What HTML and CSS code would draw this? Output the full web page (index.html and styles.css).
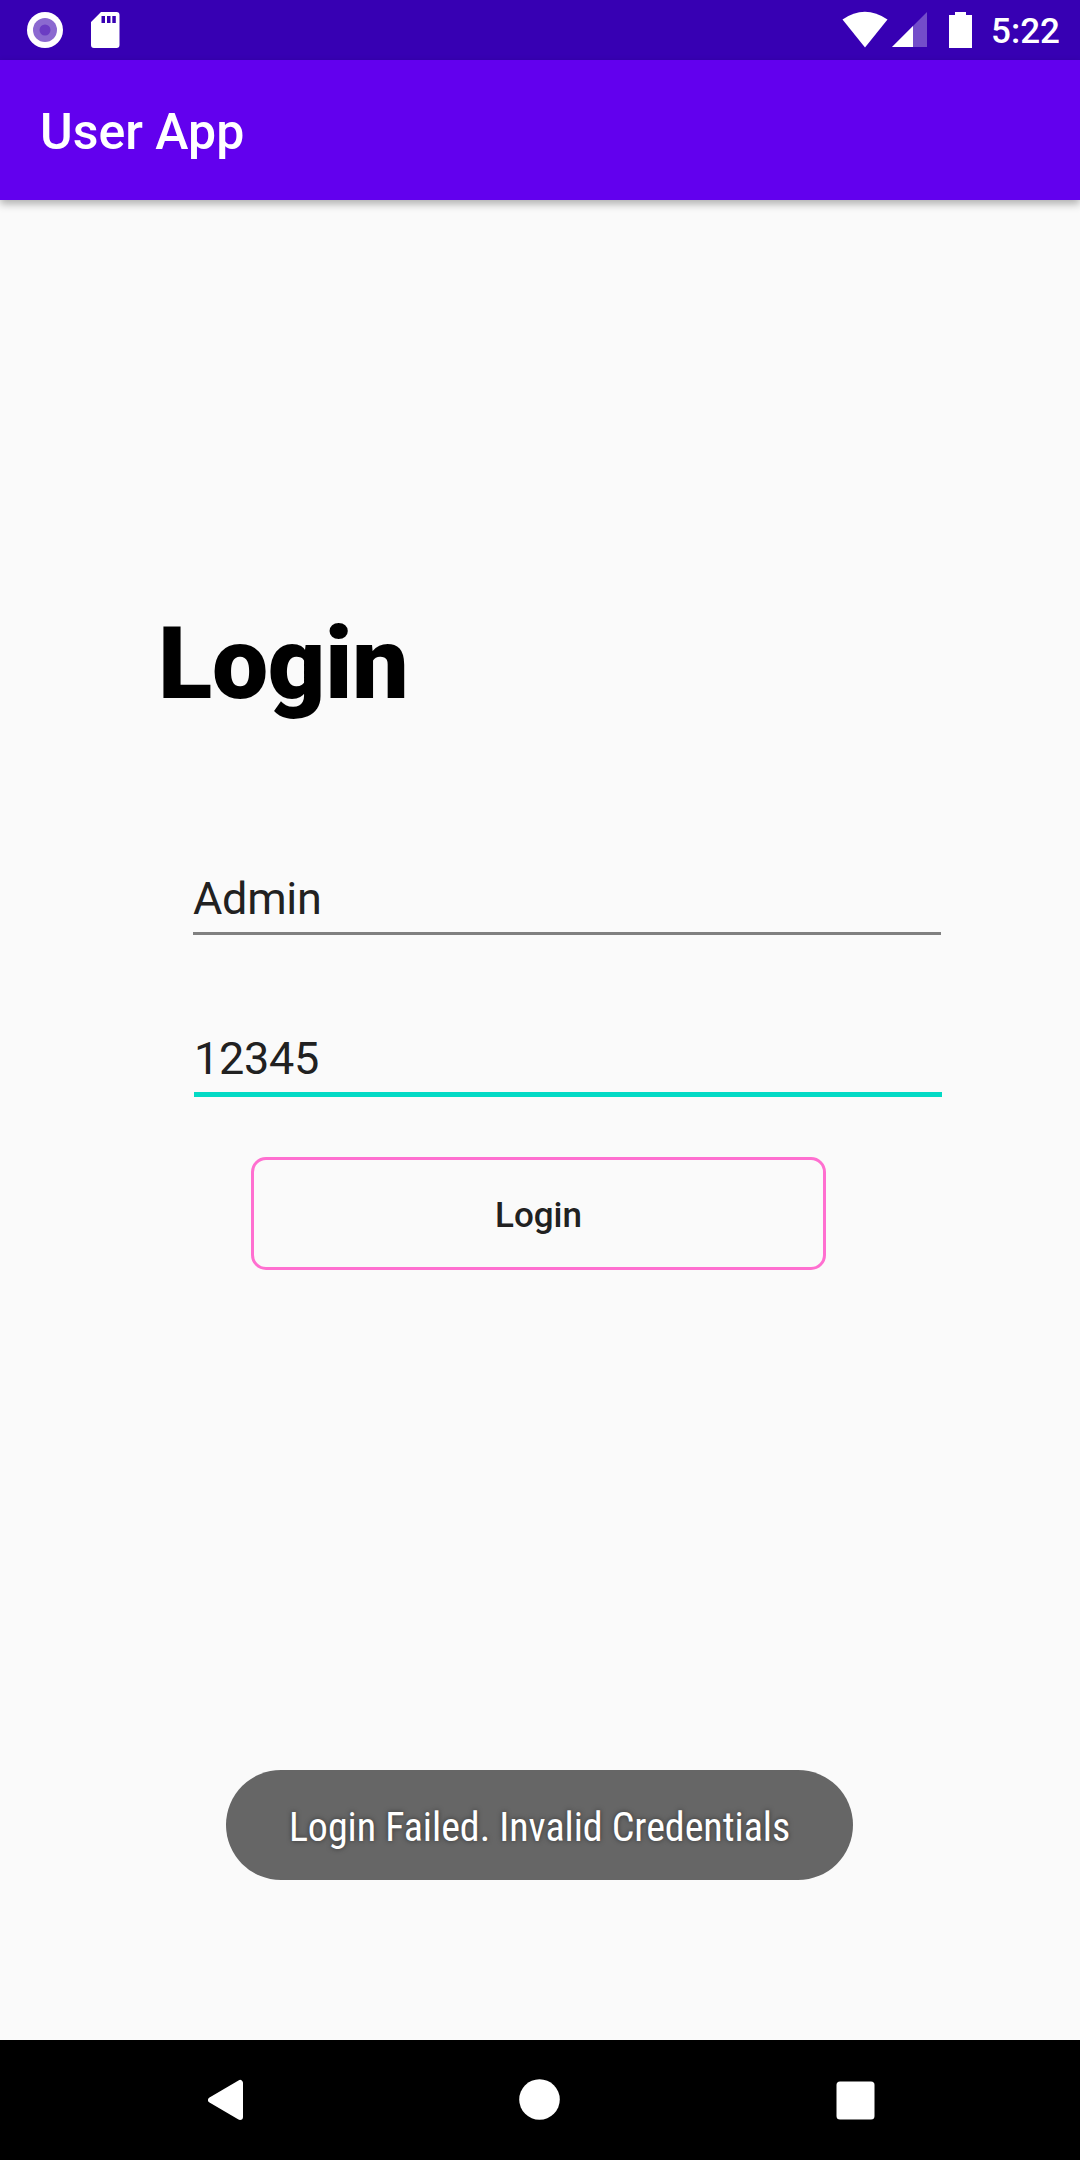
FILE: index.html
```html
<!DOCTYPE html>
<html lang="en">
<head>
<meta charset="utf-8">
<title>User App</title>
<link rel="stylesheet" href="styles.css">
</head>
<body>
<div class="screen">
  <header class="status-bar">
    <svg class="status-icons" width="140" height="60" viewBox="0 0 140 60">
      <circle cx="45" cy="30" r="18" fill="#fff"/>
      <circle cx="45" cy="30" r="12" fill="#8b69d0"/>
      <circle cx="45" cy="30" r="5.5" fill="#6b3cc3"/>
      <path fill="#fff" fill-rule="evenodd" d="M101 12H116.500Q119.500 12 119.500 15V45Q119.500 48 116.500 48H94Q91 48 91 45V22ZM101.500 16V23H105V16ZM107 16V23H110.500V16ZM112.300 16V23H115.800V16Z"/>
    </svg>
    <div class="status-right">
      <svg width="150" height="60" viewBox="0 0 150 60">
        <path fill="#fff" d="M2.500 19.500Q24.800 4 47.500 19.500L25 47.500Z"/>
        <path fill="#fff" fill-opacity=".3" d="M87 12V47H52Z"/>
        <path fill="#fff" d="M73 26V47H52Z"/>
        <path fill="#fff" d="M109 15H115V12H126V15H132V48H109Z"/>
      </svg>
      <span class="clock">5:22</span>
    </div>
  </header>
  <div class="app-bar"><h1 class="app-title">User App</h1></div>
  <main class="content">
    <h2 class="heading">Login</h2>
    <div class="field">Admin</div>
    <div class="field field-active">12345</div>
    <button class="login-button">Login</button>
    <div class="toast"><span class="toast-text">Login Failed. Invalid Credentials</span></div>
  </main>
  <nav class="nav-bar">
    <svg width="36" height="42" viewBox="0 0 36 42"><path fill="#fff" stroke="#fff" stroke-width="6" stroke-linejoin="round" d="M3 21L32 4V38Z"/></svg>
    <svg class="nav-home" width="41" height="41" viewBox="0 0 41 41"><circle cx="20.500" cy="20.500" r="20.300" fill="#fff"/></svg>
    <svg width="39" height="39" viewBox="0 0 39 39"><rect x=".5" y=".5" width="38" height="38" rx="3.500" fill="#fff"/></svg>
  </nav>
</div>
</body>
</html>
```
FILE: styles.css
```css
* { box-sizing: border-box; }
body { margin: 0; font-family: Roboto, sans-serif; background: #fafafa; }
.screen { width: 1080px; height: 2160px; display: flex; flex-direction: column; background: #fafafa; overflow: hidden; }
.status-bar { height: 60px; background: #3700b3; display: flex; justify-content: space-between; flex: none; }
.status-right { display: flex; padding-right: 20px; }
.status-right svg { margin-right: 1px; }
.clock { color: #fff; font-size: 35px; font-weight: 500; line-height: 63px; }
.app-bar { height: 140px; flex: none; background: #6200ee; padding-left: 40px; box-shadow: 0 4px 8px rgba(0,0,0,.3); position: relative; }
.app-title { margin: 0; color: #fff; font-size: 50px; font-weight: 500; line-height: 145px; }
.content { flex: 1; display: flex; flex-direction: column; padding-top: 404px; }
.heading { margin: 0 0 0 158px; font-size: 100px; line-height: 120px; font-weight: 900; letter-spacing: -0.3px; color: #000; }
.field { margin: 146px 0 0 193px; width: 748px; height: 65px; font-size: 45px; line-height: 58px; letter-spacing: -0.3px; color: #212121; border-bottom: 3px solid #808080; }
.field-active { margin: 95px 0 0 194px; height: 67px; border-bottom: 5px solid #03dac5; }
.login-button { margin: 60px 0 0 251px; width: 575px; height: 113px; border: 3px solid #ff6fd0; border-radius: 15px; background: transparent; font: 500 35px Roboto, sans-serif; color: #212121; padding: 3px 0 0; }
.toast { margin: 500px 0 0 226px; width: 627px; height: 110px; padding-top: 4px; border-radius: 55px; background: #666; display: flex; justify-content: center; align-items: center; }
.toast-text { font-family: "Roboto Condensed", Roboto, sans-serif; font-stretch: 75%; font-size: 40px; letter-spacing: -0.04px; color: #fff; text-shadow: 0 0 5px rgba(0,0,0,.5); white-space: nowrap; }
.nav-bar { height: 120px; flex: none; background: #000; display: flex; justify-content: space-between; align-items: center; padding: 0 205px 0 208px; }
.nav-home { margin: 0 2px 2px 0; }
```
